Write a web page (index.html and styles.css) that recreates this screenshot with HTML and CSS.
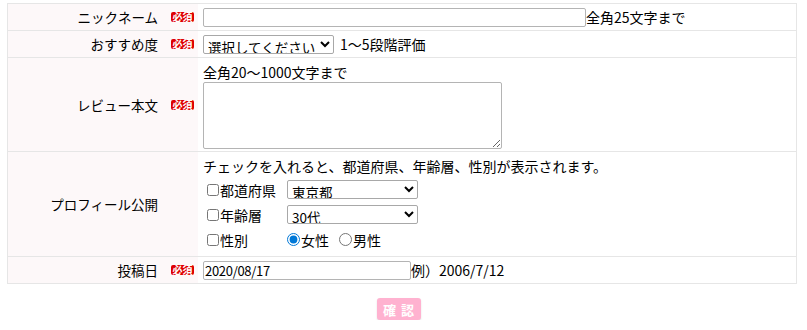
FILE: index.html
```html
<!DOCTYPE html>
<html lang="ja">
<head>
<meta charset="utf-8">
<link rel="stylesheet" href="styles.css">
</head>
<body>
<form class="form">
  <div class="table">
    <div class="row r1">
      <div class="label"><span class="lt">ニックネーム</span><span class="req">必須</span></div>
      <div class="value inline"><input class="txt nick" type="text"><span class="note">全角25文字まで</span></div>
    </div>
    <div class="row r2">
      <div class="label"><span class="lt">おすすめ度</span><span class="req">必須</span></div>
      <div class="value inline"><select class="sel rate"><option>選択してください</option></select><span class="note gap">1～5段階評価</span></div>
    </div>
    <div class="row r3">
      <div class="label"><span class="lt">レビュー本文</span><span class="req">必須</span></div>
      <div class="value stack"><span class="note">全角20～1000文字まで</span><textarea class="area"></textarea></div>
    </div>
    <div class="row r4">
      <div class="label"><span class="lt">プロフィール公開</span><span class="req hidden">必須</span></div>
      <div class="value stack">
        <span class="note wide">チェックを入れると、都道府県、年齢層、性別が表示されます。</span>
        <div class="prow"><label class="ck"><input type="checkbox">都道府県</label><select class="sel pref"><option>東京都</option></select></div>
        <div class="prow"><label class="ck"><input type="checkbox">年齢層</label><select class="sel pref"><option>30代</option></select></div>
        <div class="prow"><label class="ck"><input type="checkbox">性別</label><label class="rd"><input type="radio" name="sex" checked>女性</label><label class="rd"><input type="radio" name="sex">男性</label></div>
      </div>
    </div>
    <div class="row r5">
      <div class="label"><span class="lt">投稿日</span><span class="req">必須</span></div>
      <div class="value inline"><input class="txt date" type="text" value="2020/08/17"><span class="note">例）2006/7/12</span></div>
    </div>
  </div>
  <div class="actions"><button type="button" class="btn">確 認</button></div>
</form>
</body>
</html>
```

FILE: styles.css
```css
* { box-sizing: border-box; }
body {
  margin: 0;
  font-family: "Noto Sans CJK JP", "Noto Sans", sans-serif;
  font-size: 14px;
  color: #000;
  background: #fff;
}
.form { padding: 3px 10px 0 7px; }
.table {
  border: 1px solid #e6e6e6;
  border-bottom: none;
  width: 790px;
}
.row {
  display: grid;
  grid-template-columns: 190px 1fr;
  border-bottom: 1px solid #e6e6e6;
}
.r1, .r2, .r5 { height: 27px; }
.r3 { height: 94px; }
.r4 { height: 105px; }
.label {
  background: #fdf8f9;
  display: flex;
  align-items: center;
  justify-content: flex-end;
  padding-right: 4px;
  font-size: 13.5px;
}
.req {
  display: inline-block;
  background: #de0000;
  color: #fff;
  font-size: 10px;
  font-weight: bold;
  line-height: 10px;
  height: 10px;
  width: 23px;
  text-align: center;
  border-radius: 2px;
  margin-left: 13px;
}
.hidden { visibility: hidden; }
.value { padding-left: 5px; }
.inline { display: flex; align-items: center; }
.stack { display: flex; flex-direction: column; align-items: flex-start; padding-top: 5px; }
.note { line-height: 18px; white-space: nowrap; }
.gap { margin-left: 6px; }
.txt {
  border: 1px solid #b4b4b4;
  border-radius: 2px;
  height: 19px;
  padding: 0 1px;
  font-family: inherit;
  font-size: 13px;
  margin: 0;
}
.nick { width: 383px; }
.date { width: 208px; letter-spacing: -0.3px; }
.sel {
  height: 19px;
  border: 1px solid #a8a8a8;
  border-radius: 2px;
  font-family: inherit;
  font-size: 13.5px;
  padding: 0;
  margin: 0;
  background: #fff;
  color: #000;
}
.rate { width: 131px; }
.pref { width: 131px; }
.area {
  margin-top: 1px;
  width: 299px;
  height: 67px;
  border: 1px solid #b4b4b4;
  border-radius: 2px;
  resize: both;
}
.prow {
  display: flex;
  align-items: center;
  height: 25px;
}
.prow:first-of-type { margin-top: 2px; }
.ck {
  display: flex;
  align-items: center;
  width: 84px;
}
.ck input {
  margin: 0 1px 0 4px;
  width: 12px;
  height: 12px;
  accent-color: #0078d7;
}
.rd { display: flex; align-items: center; margin-right: 10px; }
.rd input { margin: 0 1px 0 0; width: 13px; height: 13px; accent-color: #0078d7; }
.actions {
  display: flex;
  justify-content: center;
  padding-top: 14px;
  padding-right: 6px;
}
.btn {
  width: 44px;
  height: 22px;
  border: none;
  border-radius: 3px;
  background: #ffb2d0;
  color: #fff;
  font-family: inherit;
  font-weight: bold;
  font-size: 13px;
  letter-spacing: 1px;
  white-space: pre;
  padding: 0;
  box-shadow: 0 1px 2px rgba(0,0,0,0.12);
}
```
